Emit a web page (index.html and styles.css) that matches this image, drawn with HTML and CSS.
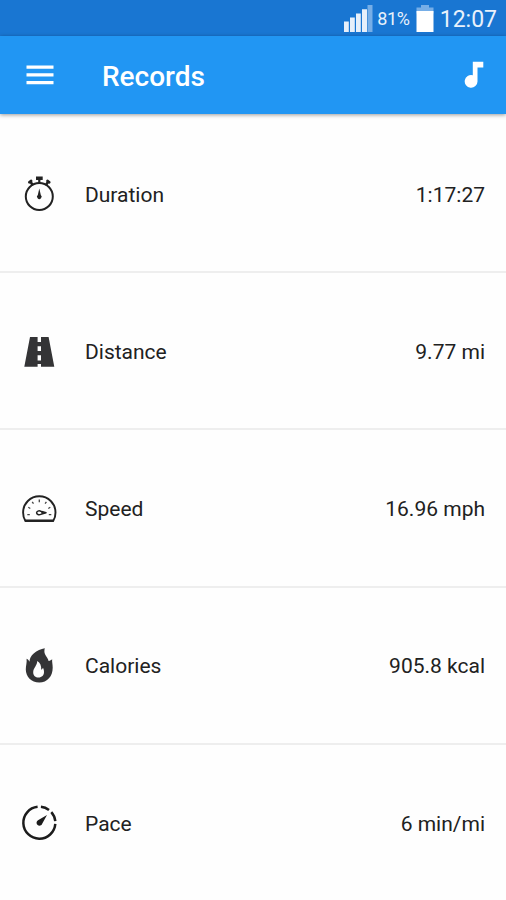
FILE: index.html
```html
<!DOCTYPE html>
<html lang="en">
<head>
  <meta charset="UTF-8" />
  <meta name="viewport" content="width=device-width, initial-scale=1.0"/>
  <title>Records</title>
  <link rel="stylesheet" href="styles.css">
</head>
<body>
  <div class="status-bar">
    <svg class="signal" width="29" height="28" viewBox="0 0 29 28">
      <path fill="#e6effa" d="M0 16.5h4.8V27H0zM6 12.5h4.8V27H6zM12 8.5h4.8V27H12zM18 4.2h5V27h-5z"/>
      <path fill="#76aee7" d="M23.5 0h5v27h-5z"/>
    </svg>
    <span class="percent">81%</span>
    <svg class="battery" width="18" height="28" viewBox="0 0 18 28">
      <path fill="#76aee7" d="M5 0h8v2.5h4.5v6H.5v-6H5z"/>
      <path fill="#fff" d="M.5 6h17v21H.5z"/>
    </svg>
    <span class="clock">12:07</span>
  </div>

  <header class="app-bar">
    <button class="menu-btn" aria-label="Menu">
      <svg width="28" height="20" viewBox="0 0 28 20">
        <path fill="#fff" d="M.5.5h27v3.3H.5zM.5 8.2h27v3.3H.5zM.5 15.9h27v3.3H.5z"/>
      </svg>
    </button>
    <h1 class="title">Records</h1>
    <button class="music-btn" aria-label="Music">
      <svg width="20" height="28" viewBox="0 0 20 28">
        <path fill="#fff" d="M8.8.7h10.5v5.7h-5.8v14A6.4 6.4 0 1 1 8.8 14.2z"/>
      </svg>
    </button>
  </header>

  <ul class="records">
    <li class="record">
      <svg class="icon" viewBox="0 0 40 40">
        <circle cx="20.3" cy="22.5" r="13.5" fill="none" stroke="#222" stroke-width="2"/>
        <path fill="#222" d="M17 2.5h6.7V6h-2.3v3h-2.2V6H17zM20.3 14.5l1.5 6.5a2.3 2.3 0 1 1-3 0z"/>
        <path stroke="#222" stroke-width="2.6" stroke-linecap="round" d="M10.3 8.3l1.9-1.4M30.3 8.3l-1.9-1.4M11.8 8.2l1.5 2.3M28.8 8.2l-1.5 2.3"/>
      </svg>
      <span class="label">Duration</span>
      <span class="value">1:17:27</span>
    </li>
    <li class="record">
      <svg class="icon" viewBox="0 0 40 40">
        <path fill="#343436" fill-rule="evenodd" d="M11 6h7.6v5H22V6h7.6l5.7 29.7H22V33h-3.4v2.7H5.3zM18.6 15.3V20H22v-4.7zM18.6 24.3v5.2H22v-5.2z"/>
      </svg>
      <span class="label">Distance</span>
      <span class="value">9.77 mi</span>
    </li>
    <li class="record">
      <svg class="icon" viewBox="0 0 40 40">
        <path fill="none" stroke="#222" stroke-width="1.9" stroke-linejoin="round" d="M6.3 32.8C4.8 30.5 4.1 28 4.1 24.5a16.2 16.2 0 0 1 32.4 0c0 3.5-.7 6-2.2 8.3z"/>
        <path stroke="#222" stroke-width="2.3" d="M5.8 32.8h29"/>
        <path stroke="#444" stroke-width="1.3" d="M8.3 26.7h2.5M29.8 26.7h2.5M9.3 19.3l2 1.2M31.3 19.3l-2 1.2M13.2 13.8l1.3 1.9M27.4 13.8l-1.3 1.9M20.3 11.5v2.7"/>
        <path fill="none" stroke="#222" stroke-width="1.5" stroke-linejoin="round" d="M21.8 23.2l5.2 1.6-5.2 1.6c-2 .8-4.2 0-4.2-1.6s2.2-2.4 4.2-1.6z"/>
        <circle cx="23.5" cy="24.8" r="1.3" fill="#222"/>
      </svg>
      <span class="label">Speed</span>
      <span class="value">16.96 mph</span>
    </li>
    <li class="record">
      <svg class="icon" viewBox="0 0 40 40">
        <path fill="#343436" fill-rule="evenodd" d="M25.8 3.2c-1.2 4.4.4 6.5 2.2 9.2.8 1.3 1.3 2.4 1.6 3.6 1.6-.2 2.7-.8 3.6-1.7-.4 2.5.5 4.8.5 8.4 0 8.5-5.4 14.8-13.4 14.8S6.800 31.8 6.800 24.600c0-4 1.200-6.700.8-10.900 1.400.8 2.300 1.700 2.900 3 .2-3.400 1.500-5.800 4.200-8.200 3.300-2.900 7.200-4.800 11.100-5.300zM18.200 16c.2 4.300-4 7-4 11.200 0 3.500 2.400 5.300 5.300 5.300 3.400 0 5.500-2.300 5.500-5.500 0-1.700-.4-3-1-4.200-.4 1-1 1.600-1.800 2 .3-4-1-7.200-4-8.800z"/>
      </svg>
      <span class="label">Calories</span>
      <span class="value">905.8 kcal</span>
    </li>
    <li class="record">
      <svg class="icon" viewBox="0 0 40 40">
        <path fill="none" stroke="#1c1c1c" stroke-width="2.5" d="M36.3 20.900A16 16 0 1 1 18.600 3.800M21.900 3.800a16 16 0 0 1 8.100 3.200M32.300 9.100a16 16 0 0 1 4 9"/>
        <path fill="#1c1c1c" d="M28 11.900l-4.800 8.800a2.900 2.900 0 1 1-4.200-3.400z"/>
      </svg>
      <span class="label">Pace</span>
      <span class="value">6 min/mi</span>
    </li>
  </ul>
</body>
</html>
```
FILE: styles.css
```css
* {
  margin: 0;
  padding: 0;
  box-sizing: border-box;
}

body {
  font-family: Roboto, 'Liberation Sans', sans-serif;
  background: #fefefe;
  color: #212121;
  min-height: 100vh;
  overflow: hidden;
}

.status-bar {
  height: 36px;
  background: #1976d2;
  color: #e8f1fb;
  display: flex;
  align-items: center;
  justify-content: flex-end;
  padding: 1px 9px 0 0;
}

.signal {
  margin-right: 4px;
}

.percent {
  font-size: 18px;
  letter-spacing: -0.3px;
  margin-right: 6px;
}

.battery {
  margin-right: 6px;
}

.clock {
  font-size: 23px;
  padding-top: 1px;
}

.app-bar {
  height: 78px;
  background: #2196f3;
  display: flex;
  align-items: center;
  padding: 0 22px 0 26px;
  box-shadow: 0 1px 4px rgba(0,0,0,0.4);
}

.menu-btn,
.music-btn {
  display: flex;
  border: none;
  background: none;
}

.title {
  flex: 1;
  margin-left: 48px;
  padding-top: 3px;
  color: #fff;
  font-size: 28px;
  font-weight: 500;
}

.records {
  list-style: none;
  padding-top: 2px;
}

.record {
  height: 157.2px;
  display: flex;
  align-items: center;
  padding: 0 21px 0 19px;
  border-bottom: 2px solid #eee;
  font-size: 21px;
}

.record:last-child {
  border-bottom: none;
}

.icon {
  width: 40px;
  height: 40px;
  margin-right: 26px;
}

.label,
.value {
  padding-top: 2px;
}

.label {
  flex: 1;
}
```
